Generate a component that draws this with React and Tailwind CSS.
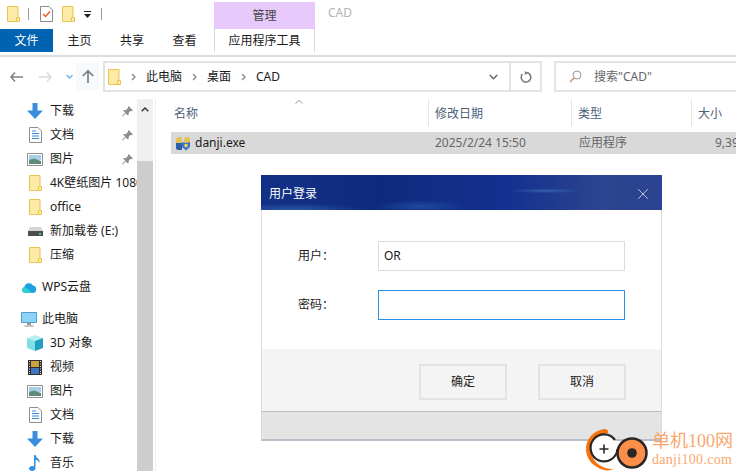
import React from "react";
import { X } from "lucide-react";

const Folder = ({ className = "" }) => (
  <svg width="13" height="16" viewBox="0 0 13 16" className={className}>
    <path d="M.5.5h10.500v15H.5z" fill="#fdeaa6" stroke="#e9c44f" />
    <path d="M9.500 11.500h3v4h-3z" fill="#fdeaa6" stroke="#e9c44f" />
  </svg>
);

const DownloadIcon = () => (
  <svg width="16" height="16" viewBox="0 0 16 16">
    <path d="M5.500 0h5v7.500H16L8 16 0 7.500h5.500z" fill="#3a8ddc" />
  </svg>
);

const DocIcon = () => (
  <svg width="13" height="16" viewBox="0 0 13 16">
    <path d="M.5.5H9L12.500 4v11.500H.5z" fill="#fff" stroke="#8f8f8f" />
    <path d="M3 4h4M3 6.500h7M3 9h7M3 11.500h7" stroke="#3a8ddc" />
  </svg>
);

const PictureIcon = () => (
  <svg width="16" height="13" viewBox="0 0 16 13">
    <path d="M.5.5h15v12H.5z" fill="#fff" stroke="#8f8f8f" />
    <path d="M2 2h12v5H2z" fill="#a9cfe6" />
    <path d="M2 7l5-1.500L14 8v3H2z" fill="#5f8a78" />
  </svg>
);

const DriveIcon = () => (
  <svg width="15" height="9" viewBox="0 0 15 9">
    <path d="M2 0h11l2 4H0z" fill="#d5d5d5" />
    <path d="M0 4h15v5H0z" fill="#4d4d4d" />
    <path d="M11 6h2v1.500h-2z" fill="#5fe08a" />
  </svg>
);

const CloudIcon = () => (
  <svg width="15" height="11" viewBox="0 0 15 11">
    <path d="M3 11a3 3 0 0 1-.6-5.900A4.600 4.600 0 0 1 11 3.600 3.800 3.800 0 0 1 11.500 11z" fill="#1d9fe4" />
    <path d="M3 11a3 3 0 0 1-.6-5.900C5 6 8 9 10 11z" fill="#2fd0cf" />
  </svg>
);

const MonitorIcon = () => (
  <svg width="16" height="15" viewBox="0 0 16 15">
    <path d="M.5.5h15v10H.5z" fill="#8ed3f5" stroke="#4d9ed0" />
    <path d="M6 11h4v2H6z" fill="#9a9a9a" />
    <path d="M3.500 13.500h9v1h-9z" fill="#8a8a8a" />
  </svg>
);

const CubeIcon = () => (
  <svg width="16" height="16" viewBox="0 0 16 16">
    <path d="M8 0l8 3-8 3-8-3z" fill="#b6eef2" />
    <path d="M0 3l8 3v10l-8-3z" fill="#7fdfe6" />
    <path d="M16 3L8 6v10l8-3z" fill="#1f9fc0" />
  </svg>
);

const VideoIcon = () => (
  <svg width="14" height="15" viewBox="0 0 14 15">
    <path d="M0 0h14v15H0z" fill="#2e2e2e" />
    <path d="M3 1h8v6H3z" fill="#c9a43c" />
    <path d="M3 8h8v6H3z" fill="#3f76c4" />
    <path d="M1 1.500h1M1 4h1M1 6.500h1M1 9h1M1 11.500h1M1 13.500h1M12 1.500h1M12 4h1M12 6.500h1M12 9h1M12 11.500h1M12 13.500h1" stroke="#ddd" />
  </svg>
);

const MusicIcon = () => (
  <svg width="12" height="16" viewBox="0 0 12 16">
    <path d="M5 0h1.500c.3 3 5 3.500 4 8-.5-2-2.500-3-4-3.300V13c0 1.700-1.600 3-3.300 3S0 15 0 13.500 1.500 11 3.200 11c.7 0 1.300.1 1.800.4z" fill="#2f8fe0" />
  </svg>
);

const ExeIcon = () => (
  <svg width="16" height="15" viewBox="0 0 16 15">
    <path d="M1 3l2-2h3l1 2v5H1z" fill="#e3c25a" />
    <path d="M9 3l2-2h3l1 2v5H9z" fill="#e3c25a" />
    <path d="M1 7h6v7H2.500L1 12.500z" fill="#2d5fa8" />
    <path d="M7 6l4 1 4-1v5l-4 3.500L7 11z" fill="#3d78c8" />
    <path d="M9.500 8h3v3h-3z" fill="#f0d060" />
  </svg>
);

const PinIcon = () => (
  <svg width="11" height="11" viewBox="0 0 11 11">
    <path d="M6.500 0L11 4.500 9.800 5.200 8.700 4.800 6.600 7l.2 1.800L5.800 9.600 3.700 7.400.7 10.600 0 10l3.300-3.200L1.200 4.800 2 3.900l1.900.2L6 2l-.2-1z" fill="#8a8f96" />
  </svg>
);

const Chevron = () => (
  <svg width="5" height="8" viewBox="0 0 5 8" className="mx-[10px]">
    <path d="M1 1l3 3-3 3" fill="none" stroke="#8a8a8a" strokeWidth="1.400" />
  </svg>
);

const Logo = () => (
  <div className="absolute bottom-0 right-[3px] flex items-start gap-[3px]">
    <svg width="63" height="43" viewBox="0 0 63 43" className="shrink-0">
      <path d="M18 1C7 3 0 11 0 21c0 10 7 18 18 21 4 1 8 0 9-1-11 0-22-7-22-20C5 12 11 7 22 5c1-2-1-4-4-4z" fill="#f5740f" />
      <path d="M29 12A13.500 13.500 0 1 0 31.500 21" fill="#fff" stroke="#2a2624" strokeWidth="2.200" />
      <path d="M18 16.500v9M13.500 21h9" stroke="#2a2624" strokeWidth="1.600" />
      <circle cx="46" cy="25" r="14.500" fill="#fb8f49" stroke="#2a2624" strokeWidth="2.500" />
      <circle cx="46" cy="25" r="4.800" fill="#2a2624" />
    </svg>
    <div className="mt-[1px] flex flex-col items-start font-['Liberation_Serif','Noto_Sans_CJK_SC',serif] text-[#f9a66f]">
      <span className="text-[18px] leading-[24px]">单机100网</span>
      <span className="text-[14px] leading-[14px] tracking-[0.3px]">danji100.com</span>
    </div>
  </div>
);

const navTop = [
  { label: "下载", icon: <DownloadIcon />, pin: true },
  { label: "文档", icon: <DocIcon />, pin: true },
  { label: "图片", icon: <PictureIcon />, pin: true },
  { label: "4K壁纸图片 1080", icon: <Folder /> },
  { label: "office", icon: <Folder /> },
  { label: "新加载卷 (E:)", icon: <DriveIcon /> },
  { label: "压缩", icon: <Folder /> },
];

const navPc = [
  { label: "3D 对象", icon: <CubeIcon /> },
  { label: "视频", icon: <VideoIcon /> },
  { label: "图片", icon: <PictureIcon /> },
  { label: "文档", icon: <DocIcon /> },
  { label: "下载", icon: <DownloadIcon /> },
  { label: "音乐", icon: <MusicIcon /> },
];

const NavRow = ({ item }) => (
  <div className="relative flex h-6 items-center whitespace-nowrap">
    <span className="flex w-[50px] shrink-0 justify-center pl-[25px] pr-[5px]">{item.icon}</span>
    <span className="text-[#1a1a1a]">{item.label}</span>
    {item.pin && (
      <span className="absolute right-[4px] top-[7px]">
        <PinIcon />
      </span>
    )}
  </div>
);

export default function App() {
  return (
    <div className="relative h-[471px] w-[736px] overflow-hidden bg-white font-['Noto_Sans','Noto_Sans_CJK_SC',sans-serif] text-[12px] text-[#1a1a1a]">
      {/* quick access + contextual title */}
      <div className="flex h-[29px] items-start">
        <div className="flex h-[29px] w-[214px] items-center pb-[2px] pl-[7px]">
          <Folder />
          <span className="ml-[8px] h-[12px] w-px bg-[#9a9a9a]" />
          <svg width="13" height="16" viewBox="0 0 13 16" className="ml-[11px]">
            <path d="M.5.5H9L12.500 4v11.500H.5z" fill="#fff" stroke="#8a8a8a" />
            <path d="M3 8l2.500 2.500L10 5.500" fill="none" stroke="#e8562a" strokeWidth="1.300" />
          </svg>
          <span className="ml-[9px] flex">
            <Folder />
          </span>
          <svg width="8" height="7" viewBox="0 0 8 7" className="ml-[9px] mt-[2px]">
            <path d="M0 0h7v1H0zM0 3h7L3.500 7z" fill="#222" />
          </svg>
          <span className="ml-[9px] h-[12px] w-px bg-[#9a9a9a]" />
        </div>
        <div className="mt-[2px] flex h-[27px] w-[101px] items-center justify-center bg-[#e8c9fb] text-[#444]">管理</div>
        <span className="ml-[13px] mt-[4px] text-[#b4b4b4]">CAD</span>
      </div>

      {/* ribbon tabs */}
      <div className="flex h-[23px] items-stretch">
        <div className="flex w-[53px] items-center justify-center bg-[#0063b1] text-white">文件</div>
        <div className="flex w-[53px] items-center justify-center">主页</div>
        <div className="flex w-[52px] items-center justify-center">共享</div>
        <div className="flex w-[53px] items-center justify-center">查看</div>
        <div className="ml-[3px] flex w-[101px] items-center justify-center border-x border-[#d9d9d9]">应用程序工具</div>
      </div>
      <div className="mt-[3px] h-[2px] bg-[#dcdcdc]" />

      {/* address bar */}
      <div className="mt-[4px] flex h-[31px] items-stretch">
        <div className="flex w-[103px] shrink-0 items-center">
          <svg width="13" height="10" viewBox="0 0 13 10" className="ml-[10px]">
            <path d="M5 .5L1 5l4 4.500M1 5h12" fill="none" stroke="#808080" strokeWidth="1.500" />
          </svg>
          <svg width="13" height="10" viewBox="0 0 13 10" className="ml-[16px]">
            <path d="M8 .5L12 5 8 9.500M12 5H0" fill="none" stroke="#dadada" strokeWidth="1.500" />
          </svg>
          <svg width="7" height="5" viewBox="0 0 7 5" className="ml-[14px]">
            <path d="M.5 1l3 3 3-3" fill="none" stroke="#6cb0e8" strokeWidth="1.300" />
          </svg>
          <span className="ml-[3px] flex h-[27px] w-[23px] items-center justify-center bg-[#f7fafd]">
            <svg width="12" height="13" viewBox="0 0 12 13">
              <path d="M.8 6L6 .8 11.200 6M6 1v12" fill="none" stroke="#808080" strokeWidth="1.700" />
            </svg>
          </span>
        </div>
        <div className="flex w-[439px] shrink-0 items-center border-2 border-[#e3e3e3] pl-[3px]">
          <Folder />
          <Chevron />
          <span>此电脑</span>
          <Chevron />
          <span>桌面</span>
          <Chevron />
          <span>CAD</span>
          <svg width="9" height="6" viewBox="0 0 9 6" className="ml-auto mr-[11px]">
            <path d="M.8 1l3.700 3.700L8.200 1" fill="none" stroke="#666" strokeWidth="1.500" />
          </svg>
          <span className="flex h-full w-[31px] items-center justify-center border-l-2 border-[#e3e3e3]">
            <svg width="12" height="12" viewBox="0 0 12 12">
              <path d="M7 1.600A4.800 4.800 0 1 1 2.500 3" fill="none" stroke="#777" strokeWidth="1.500" />
              <path d="M4.800 0v4l3-2z" fill="#777" />
            </svg>
          </span>
        </div>
        <div className="ml-[12px] flex flex-1 items-center border-y-2 border-l-2 border-[#e3e3e3] pl-[13px] text-[#666]">
          <svg width="13" height="13" viewBox="0 0 13 13">
            <circle cx="8" cy="5" r="4" fill="none" stroke="#999" />
            <path d="M5 8l-4 4" stroke="#c98a6a" strokeWidth="1.300" />
          </svg>
          <span className="ml-[12px]">搜索"CAD"</span>
        </div>
      </div>

      {/* navigation pane + file list */}
      <div className="mt-[7px] flex h-[373px]">
        <div className="w-[137px] shrink-0 overflow-hidden">
          {navTop.map((item, i) => (
            <NavRow key={i} item={item} />
          ))}
          <div className="mt-[8px] flex h-6 items-center">
            <span className="ml-[22px] mr-[5px] flex w-[15px] justify-center">
              <CloudIcon />
            </span>
            WPS云盘
          </div>
          <div className="mt-[8px] flex h-6 items-center">
            <span className="ml-[21px] mr-[5px] flex w-[16px] justify-center">
              <MonitorIcon />
            </span>
            此电脑
          </div>
          {navPc.map((item, i) => (
            <NavRow key={i} item={item} />
          ))}
        </div>
        <div className="flex w-[16px] shrink-0 flex-col bg-[#f0f0f0]">
          <div className="flex h-[20px] shrink-0 items-center justify-center">
            <svg width="8" height="5" viewBox="0 0 8 5">
              <path d="M.7 4.300L4 1l3.300 3.300" fill="none" stroke="#333" strokeWidth="1.400" />
            </svg>
          </div>
          <div className="mt-[42px] flex-1 bg-[#cdcdcd]" />
        </div>
        <div className="ml-[2px] flex-1 overflow-hidden border-l border-[#f0f0f0] pl-[15px]">
          <div className="relative flex h-[27px] items-center text-[#4c607a]">
            <span className="ml-[3px] w-[254px] pt-[2px]">名称</span>
            <span className="absolute left-[124px] top-[1px]">
              <svg width="8" height="4" viewBox="0 0 8 4" className="block">
                <path d="M.5 3.500L4 .5l3.500 3" fill="none" stroke="#999" />
              </svg>
            </span>
            <span className="h-[27px] w-px bg-[#e5e5e5]" />
            <span className="ml-[6px] w-[136px] pt-[2px]">修改日期</span>
            <span className="h-[27px] w-px bg-[#e5e5e5]" />
            <span className="ml-[6px] w-[113px] pt-[2px]">类型</span>
            <span className="h-[27px] w-px bg-[#e5e5e5]" />
            <span className="ml-[6px] pt-[2px]">大小</span>
          </div>
          <div className="mt-[6px] flex h-[22px] items-center whitespace-nowrap bg-[#d9d9d9]">
            <span className="ml-[4px] mr-[4px] flex">
              <ExeIcon />
            </span>
            <span className="w-[240px] shrink-0 text-[#1a1a1a]">danji.exe</span>
            <span className="w-[144px] shrink-0 text-[#666]">2025/2/24 15:50</span>
            <span className="w-[136px] shrink-0 text-[#666]">应用程序</span>
            <span className="text-[#666]">9,392 KB</span>
          </div>
        </div>
      </div>

      {/* login dialog */}
      <div className="absolute left-[261px] top-[175px] flex h-[266px] w-[401px] flex-col border-x border-b-2 border-[#dcdcdc] border-b-[#b9bdc7] bg-white text-[#222]">
        <div className="-mx-px flex h-[35px] shrink-0 items-center justify-between bg-[radial-gradient(ellipse_at_71%_45%,#3560ac_0%,transparent_9%),radial-gradient(ellipse_at_8%_100%,#2a56a8_0%,transparent_14%),radial-gradient(ellipse_at_40%_90%,#1f49a0_0%,transparent_14%),linear-gradient(90deg,#123186_0%,#0f2a7c_30%,#143190_62%,#2d4490_85%,#2b4391_100%)] pl-[8px] pr-[10px] pt-[3px] text-white">
          <span>用户登录</span>
          <X size={18} strokeWidth={0.9} color="#ffffff" />
        </div>
        <div className="flex-1 pt-[31px]">
          <div className="flex h-[30px] items-center">
            <span className="ml-[36px] w-[80px]">用户：</span>
            <div className="flex h-[30px] w-[247px] items-center border border-[#dcdcdc] pl-[5px] text-[#1a1a1a]">OR</div>
          </div>
          <div className="mt-[19px] flex h-[30px] items-center">
            <span className="ml-[36px] w-[80px]">密码：</span>
            <div className="h-[30px] w-[247px] border border-[#2b8fed]" />
          </div>
        </div>
        <div className="flex h-[62px] shrink-0 items-center justify-end bg-[#f4f4f4] pr-[35px] pt-[4px]">
          <div className="flex h-[36px] w-[88px] items-center justify-center border-2 border-[#e3e3e3]">确定</div>
          <div className="ml-[31px] flex h-[36px] w-[88px] items-center justify-center border-2 border-[#e3e3e3]">取消</div>
        </div>
        <div className="h-[28px] shrink-0 border-t border-[#b9bdc7] bg-[#e4e4e4]" />
      </div>

      <Logo />
    </div>
  );
}
